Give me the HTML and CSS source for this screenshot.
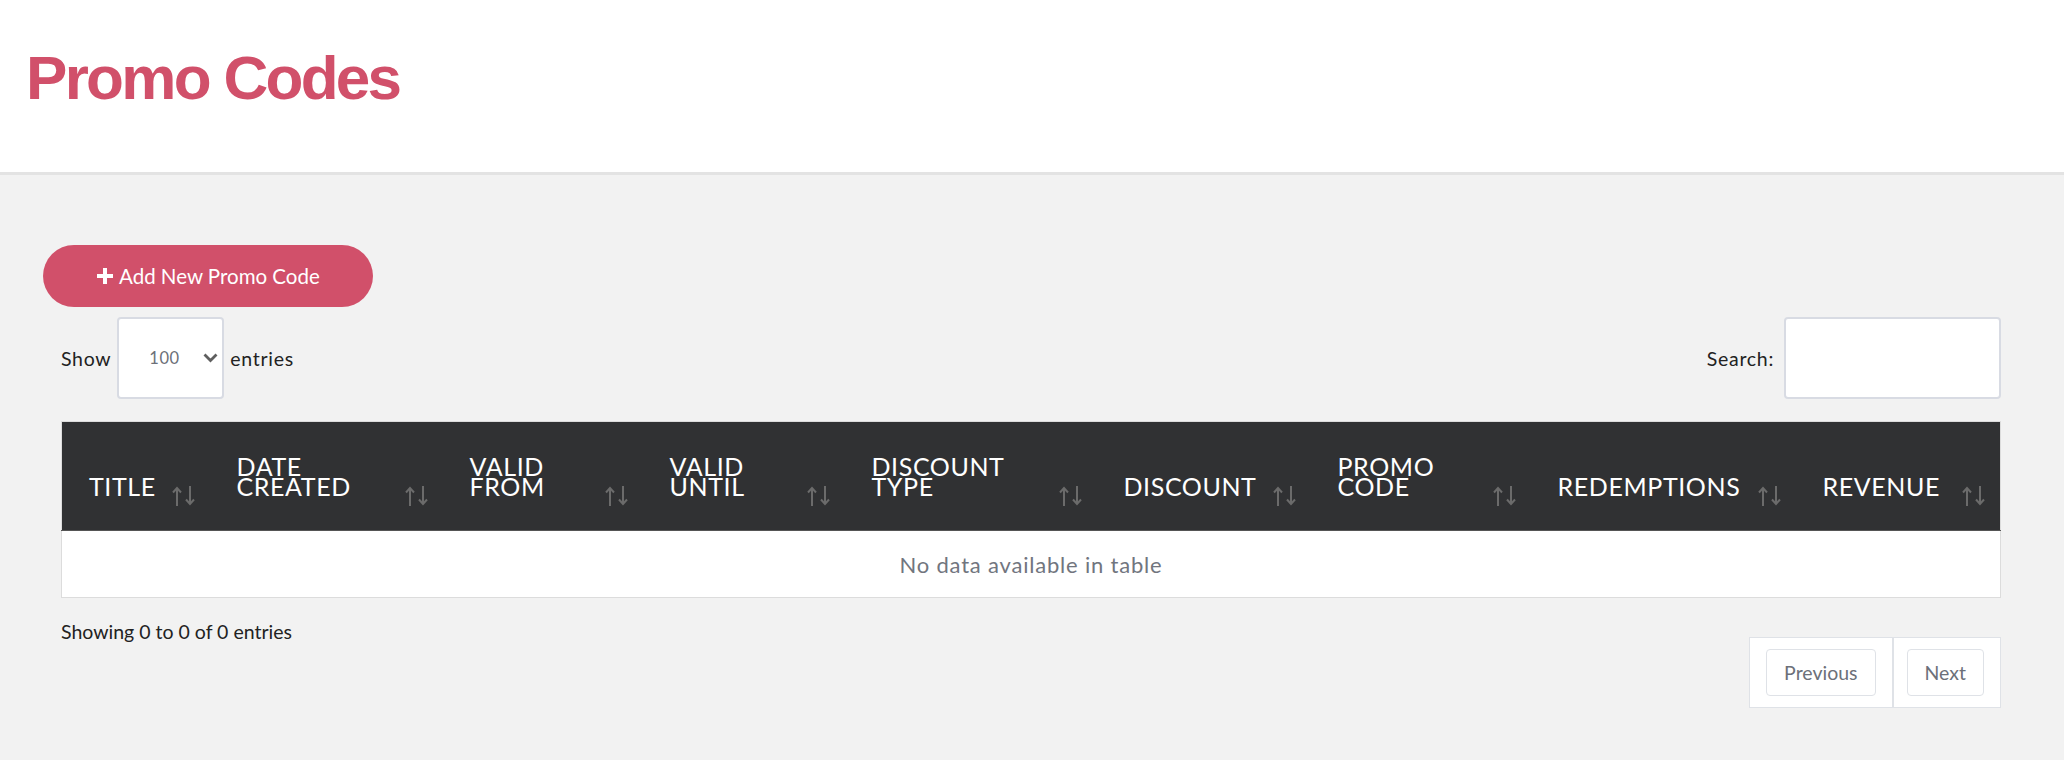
FILE: index.html
```html
<!DOCTYPE html>
<html lang="en">
<head>
    <meta charset="UTF-8">
    <meta name="viewport" content="width=device-width, initial-scale=1.0">
    <title>Promo Codes</title>
    <link rel="stylesheet" href="styles.css">
</head>
<body>

    <!-- shared sort icon -->
    <svg class="sprite" xmlns="http://www.w3.org/2000/svg">
        <symbol id="sort" viewBox="0 0 26 20">
            <path d="M6 20V2M2 6.5L6 2l4 4.5" fill="none" stroke="#6b6b6b" stroke-width="2"/>
            <path d="M19 0v18M15 13.5l4 4.5 4-4.5" fill="none" stroke="#6b6b6b" stroke-width="2"/>
        </symbol>
    </svg>

    <header class="page-header">
        <h1>Promo Codes</h1>
    </header>

    <main class="content">
        <button class="btn-add" type="button">
            <svg width="16" height="16" viewBox="0 0 16 16"><path d="M8 0v16M0 8h16" stroke="#fff" stroke-width="4"/></svg>
            Add New Promo Code
        </button>

        <div class="table-wrapper">
            <div class="table-controls">
                <label class="length">
                    Show
                    <span class="select-box">
                        <select>
                            <option>10</option>
                            <option>25</option>
                            <option>50</option>
                            <option selected>100</option>
                        </select>
                        <svg class="chevron" width="15" height="10" viewBox="0 0 15 10"><path d="M1.5 1.5L7.5 7.5l6-6" fill="none" stroke="#5f5f5f" stroke-width="2.8"/></svg>
                    </span>
                    entries
                </label>
                <label class="search">
                    Search:
                    <input type="search">
                </label>
            </div>

            <table class="promo-table">
                <colgroup>
                    <col style="width: 148px">
                    <col style="width: 233px">
                    <col style="width: 200px">
                    <col style="width: 202px">
                    <col style="width: 252px">
                    <col style="width: 214px">
                    <col style="width: 220px">
                    <col style="width: 265px">
                    <col style="width: 205px">
                </colgroup>
                <thead>
                    <tr>
                        <th>Title<svg class="sort"><use href="#sort"/></svg></th>
                        <th>Date Created<svg class="sort"><use href="#sort"/></svg></th>
                        <th>Valid From<svg class="sort"><use href="#sort"/></svg></th>
                        <th>Valid Until<svg class="sort"><use href="#sort"/></svg></th>
                        <th>Discount Type<svg class="sort"><use href="#sort"/></svg></th>
                        <th>Discount<svg class="sort"><use href="#sort"/></svg></th>
                        <th>Promo Code<svg class="sort"><use href="#sort"/></svg></th>
                        <th>Redemptions<svg class="sort"><use href="#sort"/></svg></th>
                        <th>Revenue<svg class="sort"><use href="#sort"/></svg></th>
                    </tr>
                </thead>
                <tbody>
                    <tr>
                        <td class="empty" colspan="9">No data available in table</td>
                    </tr>
                </tbody>
            </table>

            <div class="table-footer">
                <div class="info">Showing 0 to 0 of 0 entries</div>
                <ul class="pagination">
                    <li><a href="#">Previous</a></li>
                    <li><a href="#">Next</a></li>
                </ul>
            </div>
        </div>
    </main>

</body>
</html>
```

FILE: styles.css
```css
body {
    font-family: Lato, "Open Sans", sans-serif;
    background-color: #f2f2f2;
    color: #222;
    margin: 0;
    padding: 0;
}

.sprite {
    display: none;
}

.page-header {
    background-color: #fff;
    border-bottom: 3px solid #e3e3e3;
    height: 175px;
    box-sizing: border-box;
    padding: 42px 26px 0;
}

.page-header h1 {
    margin: 0;
    font-family: "Liberation Sans", Arial, sans-serif;
    font-size: 62px;
    line-height: 72px;
    font-weight: bold;
    letter-spacing: -2.7px;
    color: #d1506a;
}

.content {
    padding: 70px 43px 40px;
}

.btn-add {
    display: inline-flex;
    align-items: center;
    gap: 6px;
    height: 62px;
    padding: 0 53px 0 54px;
    border: none;
    border-radius: 31px;
    background-color: #d1506a;
    color: #fff;
    font-family: inherit;
    font-size: 20.5px;
    cursor: pointer;
}

.table-wrapper {
    padding: 0 20px 0 18px;
}

.table-controls {
    display: flex;
    justify-content: space-between;
    align-items: center;
    margin-top: 10px;
    font-size: 19.5px;
    letter-spacing: 0.7px;
}

.length,
.search {
    display: flex;
    align-items: center;
    gap: 6px;
}

.select-box {
    position: relative;
    display: inline-block;
}

.select-box select {
    appearance: none;
    width: 107px;
    height: 82px;
    padding: 0 0 0 30px;
    border: 2px solid #d8dbe3;
    border-radius: 4px;
    background-color: #fff;
    color: #6c7079;
    font-family: inherit;
    font-size: 16.5px;
    letter-spacing: 0.5px;
}

.select-box .chevron {
    position: absolute;
    right: 6px;
    top: 36px;
    pointer-events: none;
}

.search input {
    width: 217px;
    height: 82px;
    box-sizing: border-box;
    border: 2px solid #d8dbe3;
    border-radius: 4px;
    background-color: #fff;
    margin-left: 4px;
}

.promo-table {
    width: 100%;
    margin-top: 22px;
    border-collapse: collapse;
    table-layout: fixed;
    border: 1px solid #dcdcdc;
    background-color: #fff;
}

.promo-table th {
    position: relative;
    height: 108px;
    box-sizing: border-box;
    padding: 34px 40px 34px 27px;
    background-color: #303133;
    border-bottom: 1px solid #555;
    color: #fff;
    font-size: 25px;
    line-height: 20px;
    font-weight: normal;
    text-align: left;
    text-transform: uppercase;
    letter-spacing: 0.6px;
    vertical-align: bottom;
}

.promo-table th .sort {
    position: absolute;
    right: 13px;
    bottom: 24px;
    width: 26px;
    height: 20px;
}

.promo-table td.empty {
    height: 64px;
    text-align: center;
    color: #71757e;
    font-size: 22px;
    letter-spacing: 0.8px;
}

.table-footer {
    display: flex;
    justify-content: space-between;
    align-items: flex-start;
}

.info {
    margin-top: 22px;
    font-size: 19.5px;
}

.pagination {
    display: flex;
    list-style: none;
    margin: 39px 0 0;
    padding: 0;
    background-color: #fff;
    border: 1px solid #dfe2e7;
}

.pagination li {
    padding: 11px 16px 11px 16px;
}

.pagination li + li {
    border-left: 2px solid #dfe2e7;
    padding-left: 13px;
}

.pagination a {
    display: block;
    padding: 11px 17px;
    border: 1px solid #dfe2e7;
    border-radius: 4px;
    color: #6c7079;
    font-size: 19.5px;
    text-decoration: none;
}
```
